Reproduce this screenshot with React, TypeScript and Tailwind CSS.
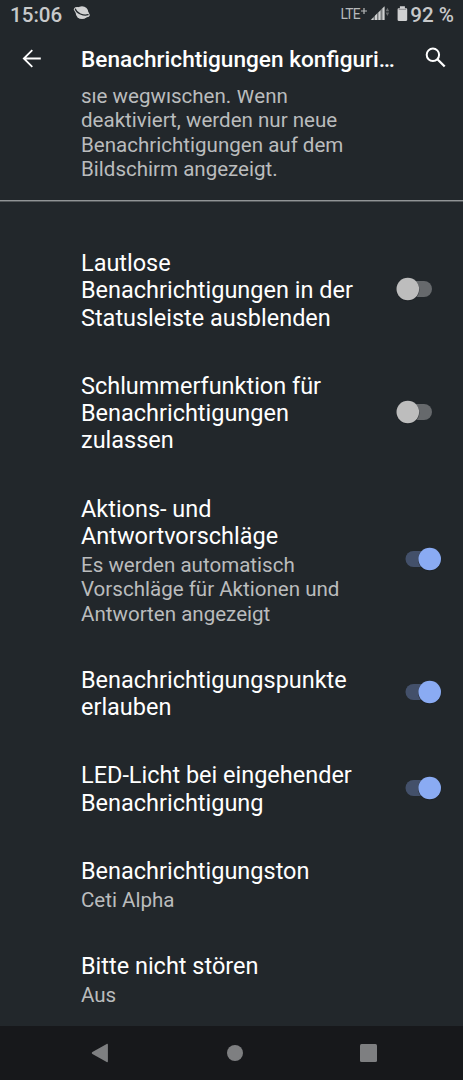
import type { ReactNode } from 'react';

function Toggle({ on }: { on: boolean }) {
  return (
    <svg className="mb-[3.6px] mr-[18px] shrink-0" width="50" height="34" viewBox="0 0 50 34" role="img" aria-label={on ? 'An' : 'Aus'}>
      {on ? (
        <>
          <rect x="10.5" y="9" width="27" height="16" rx="8" fill="#43506a" />
          <circle cx="34.7" cy="17.6" r="11.6" fill="#1a1e22" opacity=".7" />
          <circle cx="34.7" cy="17" r="11.3" fill="#8aabf3" />
        </>
      ) : (
        <>
          <rect x="10.5" y="9" width="26.5" height="16" rx="8" fill="#66696c" />
          <circle cx="12.8" cy="17.6" r="11.6" fill="#1a1e22" opacity=".7" />
          <circle cx="12.8" cy="17" r="11.3" fill="#bdbdbd" />
        </>
      )}
    </svg>
  );
}

type Setting = { title: string[]; summary?: string[]; on?: boolean };

const settings: Setting[] = [
  { title: ['Lautlose', 'Benachrichtigungen in der', 'Statusleiste ausblenden'], on: false },
  { title: ['Schlummerfunktion für', 'Benachrichtigungen', 'zulassen'], on: false },
  {
    title: ['Aktions- und', 'Antwortvorschläge'],
    summary: ['Es werden automatisch', 'Vorschläge für Aktionen und', 'Antworten angezeigt'],
    on: true,
  },
  { title: ['Benachrichtigungspunkte', 'erlauben'], on: true },
  { title: ['LED-Licht bei eingehender', 'Benachrichtigung'], on: true },
  { title: ['Benachrichtigungston'], summary: ['Ceti Alpha'] },
  { title: ['Bitte nicht stören'], summary: ['Aus'] },
];

function Lines({ lines }: { lines: string[] }): ReactNode {
  return lines.map((line) => (
    <span key={line} className="block whitespace-nowrap">
      {line}
    </span>
  ));
}

function Row({ title, summary, on }: Setting) {
  return (
    <div className="flex items-center justify-between py-[20.32px] pl-[81px]">
      <div>
        <div className="text-[23.47px] leading-[27.4px] text-white">
          <Lines lines={title} />
        </div>
        {summary && (
          <div className="mt-[2.6px] text-[20.55px] leading-[24.4px] text-[#babcbd]">
            <Lines lines={summary} />
          </div>
        )}
      </div>
      {on !== undefined && <Toggle on={on} />}
    </div>
  );
}

function StatusBar() {
  return (
    <div className="flex h-[30px] items-center justify-between pl-[10px] pr-[9px] text-[#c8c9ca]">
      <div className="flex items-center gap-[11px]">
        <span className="text-[20.6px] font-medium leading-[30px]">15:06</span>
        <svg className="mb-[4px]" width="18" height="16" viewBox="0 0 18 16" fill="none">
          <circle cx="9" cy="7.6" r="6.4" fill="#d0d1d2" />
          <ellipse cx="8.8" cy="7.2" rx="8.6" ry="3.9" transform="rotate(26 8.8 7.2)" fill="#d0d1d2" />
          <path d="M2.4 4.2C3.4 8.1 10.5 11.2 15.1 9.7" stroke="#22272b" strokeWidth="1.3" strokeLinecap="round" />
        </svg>
      </div>
      <div className="flex items-center">
        <span className="mb-[2px] text-[13.8px] leading-[26px] tracking-[-0.8px] text-[#b7b9ba]">LTE</span>
        <svg className="ml-[1px]" width="49.5" height="24" viewBox="0 0 49.5 24" fill="none">
          <path d="M0 8h6M3 5v6" stroke="#b7b9ba" strokeWidth="1.2" />
          <path d="M9.5 17 23.5 3v14z" fill="#777a7c" />
          <path d="M10 17h2.5v-2.5zM14 12.8l2-2V17h-2zM17.5 9.5l2-2V17h-2zM21.5 5.5l2-2V17h-2z" fill="#d0d1d2" />
          <path d="m24.6 8.2 1.8-3.5 1.8 3.5zM24.6 9.5h3.6L26.4 13z" fill="#696c6e" />
          <path d="M38.9 3.2h5v2h1.3c.7 0 1 .4 1 1.1v10.5c0 .7-.4 1.1-1.1 1.1h-7.4c-.7 0-1.1-.4-1.1-1.1V6.3c0-.7.4-1.1 1.1-1.1h1.2z" fill="#d0d1d2" />
          <path d="M37.7 6.3h7.4" stroke="#777a7c" strokeWidth=".8" />
        </svg>
        <span className="text-[20.6px] font-medium leading-[30px]">92 %</span>
      </div>
    </div>
  );
}

export default function App() {
  return (
    <div className="flex h-[1080px] w-[463px] flex-col overflow-hidden bg-[#22272b] font-['Roboto',sans-serif]">
      <StatusBar />
      <header className="flex h-[60px] shrink-0 items-center">
        <svg className="mb-[2px] ml-[22px] shrink-0" width="20" height="20" viewBox="0 0 20 20" fill="none" stroke="#fff" strokeWidth="1.8">
          <path d="M18.8 9.5H2M10.3 1.1 1.8 9.5l8.5 8.4" />
        </svg>
        <h1 className="ml-[39px] w-[316px] whitespace-nowrap text-[22.63px] font-medium leading-[30px] text-white">
          Benachrichtigungen konfiguri…
        </h1>
        <svg className="mb-[4px] ml-[28px] shrink-0" width="22" height="22" viewBox="0 0 22 22" fill="none" stroke="#fff" strokeWidth="2">
          <circle cx="7.9" cy="7.8" r="6.2" />
          <path d="m12.4 12.3 7.3 7.2" strokeWidth="2.3" />
        </svg>
      </header>
      <main className="min-h-0 flex-1 overflow-hidden">
        <div className="mt-[-6px] h-[117px] border-b border-[#919496] pl-[81px] text-[20.55px] leading-[24.4px] text-[#babcbd]">
          <Lines lines={['sie wegwischen. Wenn', 'deaktiviert, werden nur neue', 'Benachrichtigungen auf dem', 'Bildschirm angezeigt.']} />
        </div>
        <div className="border-t border-[#54585b] pt-[27.5px]">
          {settings.map((setting) => (
            <Row key={setting.title[0]} {...setting} />
          ))}
        </div>
      </main>
      <nav className="flex h-[54px] shrink-0 items-center bg-[#17181b]">
        <svg className="ml-[91px]" width="18" height="20" viewBox="0 0 18 20" fill="#7e7f81">
          <path d="M1.4 9.1 15.7 1c.7-.4 1.2-.1 1.2.7v16.6c0 .8-.5 1.1-1.2.7L1.4 10.9c-.8-.5-.8-1.3 0-1.8z" />
        </svg>
        <span className="ml-[118px] size-4 rounded-full bg-[#7e7f81]" />
        <span className="ml-[116.5px] size-[17.5px] rounded-[1.5px] bg-[#7e7f81]" />
      </nav>
    </div>
  );
}
